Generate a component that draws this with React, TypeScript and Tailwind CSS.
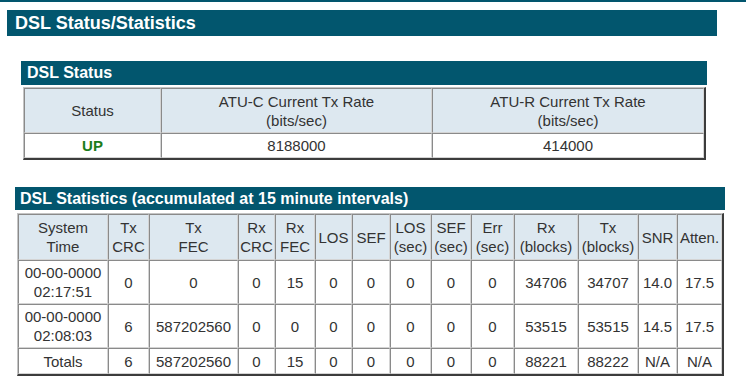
const font = "font-['Liberation_Sans',Arial,sans-serif]";

const cell =
  "border border-t-[#8a8a8a] border-l-[#8a8a8a] border-r-[#d4d4d4] border-b-[#d4d4d4] text-center align-middle px-[1px] py-[2px] leading-[19px] text-[15px] text-[#333]";
const head = cell + " bg-[#dde8f0]";
const tableCls =
  "border-separate border-spacing-0 table-fixed border-t border-l border-t-[#c4c4c4] border-l-[#c4c4c4] border-r-2 border-b-2 border-r-[#3c3c3c] border-b-[#3c3c3c]";

const statCols = [90, 41, 89, 37, 40, 37, 38, 41, 40, 43, 64, 60, 39, 45];

const statHead: [string, string?][] = [
  ["System", "Time"],
  ["Tx", "CRC"],
  ["Tx", "FEC"],
  ["Rx", "CRC"],
  ["Rx", "FEC"],
  ["LOS"],
  ["SEF"],
  ["LOS", "(sec)"],
  ["SEF", "(sec)"],
  ["Err", "(sec)"],
  ["Rx", "(blocks)"],
  ["Tx", "(blocks)"],
  ["SNR"],
  ["Atten."],
];

const statRows: (string | [string, string])[][] = [
  [["00-00-0000", "02:17:51"], "0", "0", "0", "15", "0", "0", "0", "0", "0", "34706", "34707", "14.0", "17.5"],
  [["00-00-0000", "02:08:03"], "6", "587202560", "0", "0", "0", "0", "0", "0", "0", "53515", "53515", "14.5", "17.5"],
  ["Totals", "6", "587202560", "0", "15", "0", "0", "0", "0", "0", "88221", "88222", "N/A", "N/A"],
];

function Bar({ text, className }: { text: string; className: string }) {
  return (
    <div className={"bg-[#02566e] text-white font-bold flex items-center " + className}>
      {text}
    </div>
  );
}

export default function App() {
  return (
    <div className={"w-[746px] h-[381px] bg-white overflow-hidden " + font}>
      <div className="h-[2px] bg-[#02566e]" />

      <Bar text="DSL Status/Statistics" className="mt-[8px] ml-[7px] w-[710px] h-[26px] pl-[8px] text-[18px]" />

      <Bar text="DSL Status" className="mt-[25px] ml-[21px] w-[686px] h-[24px] pl-[6px] text-[16px]" />
      <table className={tableCls + " mt-[2px] ml-[23px] w-[680px]"}>
        <colgroup>
          <col className="w-[137px]" />
          <col className="w-[271px]" />
          <col className="w-[272px]" />
        </colgroup>
        <tbody>
          <tr className="h-[45px]">
            <td className={head}>Status</td>
            <td className={head}>
              ATU-C Current Tx Rate
              <br />
              (bits/sec)
            </td>
            <td className={head}>
              ATU-R Current Tx Rate
              <br />
              (bits/sec)
            </td>
          </tr>
          <tr>
            <td className={cell + " font-bold !text-[#1b7d1b]"}>UP</td>
            <td className={cell}>8188000</td>
            <td className={cell}>414000</td>
          </tr>
        </tbody>
      </table>

      <Bar
        text="DSL Statistics (accumulated at 15 minute intervals)"
        className="mt-[27px] ml-[15px] w-[710px] h-[23px] pl-[5px] text-[16px]"
      />
      <table className={tableCls + " mt-[3px] ml-[17px] w-[705px]"}>
        <colgroup>
          {statCols.map((w, i) => (
            <col key={i} style={{ width: w }} />
          ))}
        </colgroup>
        <tbody>
          <tr className="h-[46px]">
            {statHead.map(([a, b], i) => (
              <td key={i} className={head + " whitespace-nowrap"}>
                {a}
                {b && (
                  <>
                    <br />
                    {b}
                  </>
                )}
              </td>
            ))}
          </tr>
          {statRows.map((r, ri) => (
            <tr key={ri} className={ri < 2 ? "h-[43px]" : "h-[26px]"}>
              {r.map((v, i) => (
                <td key={i} className={cell + " whitespace-nowrap"}>
                  {Array.isArray(v) ? (
                    <>
                      {v[0]}
                      <br />
                      {v[1]}
                    </>
                  ) : (
                    v
                  )}
                </td>
              ))}
            </tr>
          ))}
        </tbody>
      </table>
    </div>
  );
}
